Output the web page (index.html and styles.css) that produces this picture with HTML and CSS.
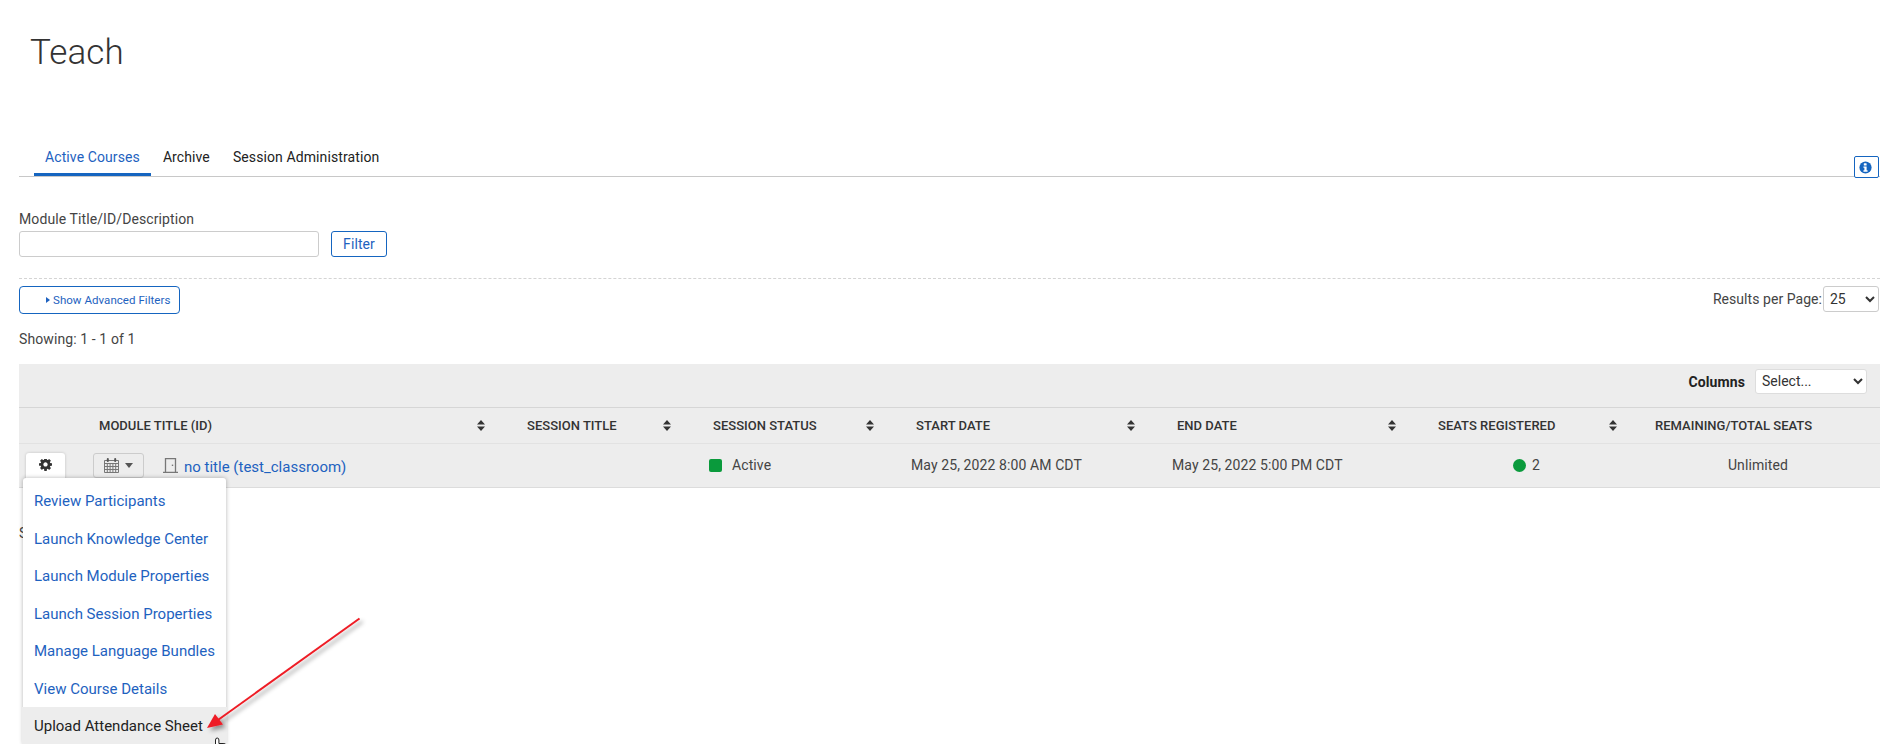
FILE: index.html
```html
<!DOCTYPE html>
<html lang="en">
<head>
<meta charset="utf-8">
<title>Teach</title>
<link rel="stylesheet" href="styles.css">
</head>
<body>
<main class="page">
  <h1 class="title">Teach</h1>

  <div class="tabbar">
    <nav class="tabs">
      <a class="tab tab-active">Active Courses</a>
      <a class="tab">Archive</a>
      <a class="tab">Session Administration</a>
    </nav>
    <button class="info-btn" aria-label="Information">
      <svg class="info-icon" viewBox="0 0 16 16"><circle cx="8" cy="8" r="6.500" fill="#1565c0"/><rect x="6.200" y="3.400" width="3" height="2.400" rx=".6" fill="#fff"/><path d="M5.800 6.800h3.400v4.200h1v1.400H5.800V11h1V8.200h-1z" fill="#fff"/></svg>
    </button>
  </div>

  <section class="filter">
    <label class="field-label">Module Title/ID/Description</label>
    <div class="filter-row">
      <input class="text-input" type="text">
      <button class="btn">Filter</button>
    </div>
  </section>

  <div class="options">
    <button class="adv-btn"><span class="caret-right"></span>Show Advanced Filters</button>
    <div class="per-page">
      <span class="per-page-label">Results per Page:</span>
      <select class="select per-page-select"><option>25</option></select>
    </div>
  </div>

  <p class="showing">Showing: 1 - 1 of 1</p>

  <section class="table">
    <div class="toolbar">
      <span class="columns-label">Columns</span>
      <select class="select columns-select"><option>Select...</option></select>
    </div>

    <div class="grid head">
      <div class="th th-module"><span>Module Title (ID)</span><svg class="sort" viewBox="0 0 8 11"><path d="M4 0l4 4.400H0zM4 11L0 6.600h8z"/></svg></div>
      <div class="th th-session"><span>Session Title</span><svg class="sort" viewBox="0 0 8 11"><path d="M4 0l4 4.400H0zM4 11L0 6.600h8z"/></svg></div>
      <div class="th th-status"><span>Session Status</span><svg class="sort" viewBox="0 0 8 11"><path d="M4 0l4 4.400H0zM4 11L0 6.600h8z"/></svg></div>
      <div class="th"><span>Start Date</span><svg class="sort" viewBox="0 0 8 11"><path d="M4 0l4 4.400H0zM4 11L0 6.600h8z"/></svg></div>
      <div class="th"><span>End Date</span><svg class="sort" viewBox="0 0 8 11"><path d="M4 0l4 4.400H0zM4 11L0 6.600h8z"/></svg></div>
      <div class="th"><span>Seats Registered</span><svg class="sort" viewBox="0 0 8 11"><path d="M4 0l4 4.400H0zM4 11L0 6.600h8z"/></svg></div>
      <div class="th th-last"><span>Remaining/Total Seats</span></div>
    </div>

    <div class="grid row">
      <div class="td td-module">
        <button class="gear-btn" aria-label="Actions">
          <svg class="gear" viewBox="0 0 1536 1536"><path d="M1024 640q0-106-75-181t-181-75-181 75-75 181 75 181 181 75 181-75 75-181zm512-109v222q0 12-8 23t-20 13l-185 28q-19 54-39 91 35 50 107 138 10 12 10 25t-9 23q-27 37-99 108t-94 71q-12 0-26-9l-138-108q-44 23-91 38-16 136-29 186-7 28-36 28h-222q-14 0-24.500-8.500t-11.500-21.500l-28-184q-49-16-90-37l-141 107q-10 9-25 9-14 0-25-11-126-114-165-168-7-10-7-23 0-12 8-23 15-21 51-66.500t54-70.500q-27-50-41-99l-183-27q-13-2-21-12.500t-8-23.500v-222q0-12 8-23t19-13l186-28q14-46 39-92-40-57-107-138-10-12-10-24 0-10 9-23 26-36 98.500-107.500t94.500-71.500q13 0 26 10l138 107q44-23 91-38 16-136 29-186 7-28 36-28h222q14 0 24.500 8.500t11.500 21.500l28 184q49 16 90 37l142-107q9-9 24-9 13 0 25 10 129 119 165 170 7 8 7 22 0 12-8 23-15 21-51 66.500t-54 70.500q26 50 41 98l183 28q13 2 21 12.500t8 23.500z"/></svg>
        </button>
        <button class="cal-btn" aria-label="Calendar">
          <svg class="cal" viewBox="0 0 15 15"><path d="M.5 2.500h14v12H.5zM.5 5.500h14M.5 8.500h14M.5 11.500h14M3.300 5.500v9M6.100 5.500v9M8.900 5.500v9M11.700 5.500v9" fill="none" stroke="#777"/><rect x="2.800" y="0" width="2" height="4" rx="1" fill="#555"/><rect x="10.200" y="0" width="2" height="4" rx="1" fill="#555"/></svg>
          <span class="caret-down"></span>
        </button>
        <svg class="door" viewBox="0 0 15 15"><path d="M2.500 14V.7h10V14M0 14.300h15" fill="none" stroke="#777" stroke-width="1.300"/><rect x="8.800" y="6.600" width="1.400" height="1.400" fill="#777"/></svg>
        <a class="link course-link">no title (test_classroom)</a>

        <ul class="menu">
          <li class="menu-item"><a class="link">Review Participants</a></li>
          <li class="menu-item"><a class="link">Launch Knowledge Center</a></li>
          <li class="menu-item"><a class="link">Launch Module Properties</a></li>
          <li class="menu-item"><a class="link">Launch Session Properties</a></li>
          <li class="menu-item"><a class="link">Manage Language Bundles</a></li>
          <li class="menu-item"><a class="link">View Course Details</a></li>
          <li class="menu-item menu-item-hover"><a>Upload Attendance Sheet</a></li>
        </ul>
      </div>
      <div class="td"></div>
      <div class="td td-status"><span class="status-dot"></span>Active</div>
      <div class="td td-date">May 25, 2022 8:00 AM CDT</div>
      <div class="td td-date">May 25, 2022 5:00 PM CDT</div>
      <div class="td td-center"><span class="seat-dot"></span>2</div>
      <div class="td td-center">Unlimited</div>
    </div>
  </section>

  <p class="showing-bottom">Showing: 1 - 1 of 1</p>
</main>

<svg class="annotation" viewBox="0 0 1890 744" aria-hidden="true">
  <defs>
    <filter id="arrow-shadow" x="-20%" y="-20%" width="140%" height="140%"><feDropShadow dx="3" dy="3" stdDeviation="2" flood-color="#000" flood-opacity=".4"/></filter>
  </defs>
  <g filter="url(#arrow-shadow)">
    <path d="M359.500 618.500L218 720" stroke="#ee1c25" stroke-width="2" fill="none"/>
    <path d="M207 728l8-14 8 10.500z" fill="#ee1c25"/>
  </g>
  <path d="M215.500 744v-4q0-2 1.700-2t1.700 2v3.500h5l1.600.5" fill="#fff" stroke="#222" stroke-width="1"/>
</svg>
```

FILE: styles.css
```css
* { box-sizing: border-box; }

html, body {
  margin: 0;
  height: 744px;
  overflow: hidden;
  background: #fff;
}

body {
  position: relative;
  font-family: Roboto, "Liberation Sans", sans-serif;
  font-size: 14px;
  letter-spacing: .1px;
  color: #444;
}

.page {
  width: 1880px;
  padding-left: 19px;
}

.title {
  margin: 0;
  padding: 32px 0 0 11px;
  height: 127px;
  font-size: 35px;
  line-height: 42px;
  font-weight: 300;
  letter-spacing: .1px;
  color: #333;
}

.tabbar {
  display: flex;
  justify-content: space-between;
  align-items: flex-end;
  height: 50px;
  border-bottom: 1px solid #c8c8c8;
}

.tabs {
  display: flex;
  margin-left: 15px;
}

.tab {
  display: block;
  height: 47px;
  padding: 19px 11px 0;
  margin-bottom: -1px;
  line-height: 16px;
  color: #222;
}

.tab + .tab { margin-left: 1px; }

.tab-active {
  height: 46px;
  color: #1e62c0;
  border-bottom: 3px solid #1565c0;
}

.info-btn {
  width: 25px;
  height: 22px;
  margin: 0 1px -2px 0;
  padding: 0;
  display: flex;
  align-items: center;
  justify-content: center;
  background: #fff;
  border: 1px solid #1565c0;
  border-radius: 2px;
}

.info-icon { width: 15px; height: 15px; margin-left: -2px; }

.filter { margin-top: 34px; }

.field-label {
  display: block;
  line-height: 16px;
  margin-bottom: 4px;
}

.filter-row {
  display: flex;
  gap: 12px;
}

.text-input {
  width: 300px;
  height: 26px;
  background: #fff;
  border: 1px solid #ccc;
  border-radius: 3px;
}

.btn {
  width: 56px;
  height: 26px;
  padding: 0;
  font: inherit;
  letter-spacing: .1px;
  color: #1e62c0;
  background: #fff;
  border: 1px solid #1565c0;
  border-radius: 3px;
}

.options {
  display: flex;
  justify-content: space-between;
  align-items: flex-start;
  margin-top: 21px;
  padding-top: 7px;
  border-top: 1px dashed #d4d4d4;
  height: 36px;
}

.adv-btn {
  display: flex;
  align-items: center;
  width: 161px;
  height: 28px;
  padding: 0 0 0 26px;
  font: inherit;
  font-size: 11.500px;
  letter-spacing: .05px;
  color: #1e62c0;
  background: #fff;
  border: 1px solid #1565c0;
  border-radius: 4px;
}

.caret-right {
  width: 0;
  height: 0;
  margin-right: 3px;
  border-left: 4px solid #1e62c0;
  border-top: 3.500px solid transparent;
  border-bottom: 3.500px solid transparent;
}

.per-page {
  display: flex;
  align-items: center;
  gap: 1px;
  margin-right: 1px;
  height: 26px;
}

.per-page-label { letter-spacing: .05px; }

.select {
  height: 26px;
  font: inherit;
  color: #333;
  background: #fff;
  border: 1px solid #ccc;
  border-radius: 3px;
  padding: 0 2px;
}

.per-page-select { width: 56px; }

.showing {
  margin: 17px 0 17px;
  line-height: 16px;
}

.table {
  width: 1861px;
  position: relative;
}

.toolbar {
  display: flex;
  justify-content: flex-end;
  align-items: center;
  gap: 10px;
  height: 44px;
  padding: 0 13px 9px 0;
  background: #ededed;
  border-bottom: 1px solid #d6d6d6;
}

.columns-label { font-weight: 700; color: #222; margin-top: 2px; }

.columns-select {
  width: 112px;
  height: 25px;
  font-size: 14px;
  border-color: #ddd;
}

.grid {
  display: grid;
  grid-template-columns: 487px 181px 208px 261px 261px 221px 242px;
  background: #ededed;
}

.head {
  height: 36px;
  border-bottom: 1px solid #e2e2e2;
}

.row {
  height: 44px;
  padding-bottom: 1px;
  border-bottom: 1px solid #dcdcdc;
}

.th {
  display: flex;
  align-items: center;
  justify-content: space-between;
  padding: 0 21px;
  font-size: 13px;
  font-weight: 500;
  letter-spacing: .02px;
  text-transform: uppercase;
  color: #333;
}

.th-module { padding-left: 80px; }
.th-session { padding-right: 16px; }
.th-status { padding-left: 26px; }
.th-last { padding: 0 0 0 17px; }

.sort { width: 8px; height: 11px; fill: #333; }

.td {
  position: relative;
  display: flex;
  align-items: center;
}

.td-module { padding: 0 0 0 7px; }
.td-status { padding-left: 22px; }
.td-date { padding-left: 16px; }
.td-center { justify-content: center; padding-right: 2px; }

.gear-btn {
  width: 39px;
  height: 28px;
  align-self: flex-start;
  margin-top: 9px;
  padding: 6px 0 0;
  display: flex;
  justify-content: center;
  background: #fff;
  border: none;
  border-radius: 3px;
  box-shadow: 0 0 3px rgba(0, 0, 0, .2);
}

.gear { width: 13px; height: 13px; fill: #333; }

.cal-btn {
  display: flex;
  align-items: center;
  gap: 6px;
  width: 51px;
  height: 25px;
  margin-left: 28px;
  padding: 0 0 0 10px;
  background: #ededed;
  border: 1px solid #ccc;
  border-radius: 3px;
}

.cal { width: 15px; height: 15px; flex: none; }

.caret-down {
  flex: none;
  width: 0;
  height: 0;
  border-top: 5px solid #555;
  border-left: 4.500px solid transparent;
  border-right: 4.500px solid transparent;
}

.door { width: 15px; height: 15px; margin-left: 19px; }

.link { color: #1e62c0; }

.course-link { margin: 4px 0 0 6px; font-size: 15px; letter-spacing: 0; }

.menu {
  position: absolute;
  left: 4px;
  top: 34px;
  width: 203px;
  margin: 0;
  padding: 4px 0 0;
  list-style: none;
  font-size: 15px;
  letter-spacing: 0;
  background: #fff;
  border-radius: 3px;
  box-shadow: 0 0 4px rgba(0, 0, 0, .3);
}

.menu-item {
  height: 37.500px;
  padding: 11px 0 0 11px;
  line-height: 16px;
  white-space: nowrap;
}

.menu-item-hover {
  margin: 0 -1px;
  padding-left: 12px;
  background: #ededed;
  color: #222;
}

.status-dot {
  width: 13px;
  height: 13px;
  margin-right: 10px;
  background: #0a9a3c;
  border-radius: 2px;
}

.seat-dot {
  width: 13px;
  height: 13px;
  margin-right: 6px;
  background: #0a9a3c;
  border-radius: 50%;
}

.showing-bottom {
  margin: 37px 0 0;
  line-height: 16px;
}

.annotation {
  position: absolute;
  left: 0;
  top: 0;
  width: 1890px;
  height: 744px;
  pointer-events: none;
}
```
